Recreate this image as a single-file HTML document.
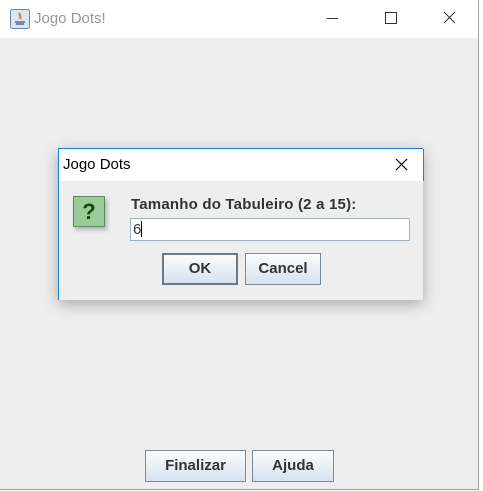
<!DOCTYPE html>
<html><head><style>
body{margin:0;width:483px;height:491px;background:#fff;position:relative;overflow:hidden;font-family:"Liberation Sans",sans-serif}
.win{position:absolute;left:0;top:0;width:478px;height:489px;background:#eeeeee;border-right:1px solid #a0a0a0;border-bottom:1px solid #a0a0a0}
.tb{position:absolute;left:0;top:0;width:478px;height:38px;background:#fff}
.tt{position:absolute;left:34px;top:10px;font-size:15px;color:#999}
.btn{position:absolute;border:1px solid #7a8a99;background:linear-gradient(#fbfcfd,#d6e2ef);font-weight:bold;font-size:15px;color:#333;text-align:center;box-sizing:border-box}
.dlg{position:absolute;left:58px;top:148px;width:365px;height:152px;background:#eeeeee;border-left:1px solid #1883d7;border-top:1px solid #1883d7;box-sizing:border-box;box-shadow:0 4px 14px rgba(0,0,0,.3)}
</style></head><body>
<div class="win">
<div class="tb">
<svg style="position:absolute;left:10px;top:9px" width="20" height="20"><rect x="0.5" y="0.5" width="19" height="19" rx="2" fill="#dbe6f1" stroke="#6a86a8"/><path d="M5 13h10M6 15h8" stroke="#4a6b95" stroke-width="1.5"/><path d="M10 4c-2 2 2 3 0 6" stroke="#e0781c" stroke-width="2" fill="none"/></svg>
<div class="tt">Jogo Dots!</div>
<div style="position:absolute;left:327px;top:18px;width:11px;height:1px;background:#333"></div>
<div style="position:absolute;left:385px;top:12px;width:10px;height:10px;border:1px solid #333"></div>
<svg style="position:absolute;left:443px;top:11px" width="13" height="13"><path d="M1 1L12 12M12 1L1 12" stroke="#333" stroke-width="1"/></svg>
</div>
<div class="btn" style="left:145px;top:450px;width:101px;height:32px;line-height:30px">Finalizar</div>
<div class="btn" style="left:252px;top:450px;width:82px;height:32px;line-height:30px">Ajuda</div>
</div>
<div class="dlg">
<div style="position:absolute;left:0;top:0;width:364px;height:32px;background:#fff;border-right:1px solid #1883d7"></div>
<div style="position:absolute;left:4px;top:7px;font-size:15px;color:#000">Jogo Dots</div>
<svg style="position:absolute;left:336px;top:9px" width="13" height="13"><path d="M1 1L12 12M12 1L1 12" stroke="#000" stroke-width="1.2"/></svg>
<div style="position:absolute;left:14px;top:47px;width:32px;height:31px;background:#9ccb9a;border:1px solid #5f8a5e;box-shadow:2px 3px 4px rgba(0,0,0,.25);box-sizing:border-box;text-align:center;font-weight:bold;font-size:22px;line-height:30px;color:#0a4d0a">?</div>
<div style="position:absolute;left:72px;top:47px;font-size:15px;font-weight:bold;color:#333;letter-spacing:0.2px">Tamanho do Tabuleiro (2 a 15):</div>
<div style="position:absolute;left:71px;top:69px;width:280px;height:23px;background:#fff;border:1px solid #a4b1bf;box-sizing:border-box;font-size:15px;line-height:21px;padding-left:2px;color:#333">6<span style="display:inline-block;width:1px;height:16px;background:#000;vertical-align:-3px"></span></div>
<div class="btn" style="left:103px;top:104px;width:76px;height:32px;line-height:28px;border:2px solid #6a7a8a">OK</div>
<div class="btn" style="left:186px;top:104px;width:76px;height:32px;line-height:30px">Cancel</div>
</div>
</body></html>
